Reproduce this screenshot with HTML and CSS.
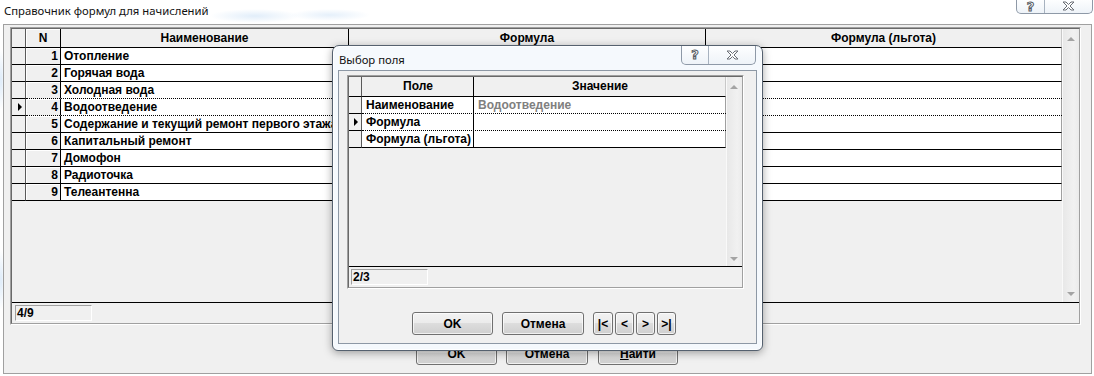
FILE: index.html
```html
<!DOCTYPE html>
<html lang="ru">
<head>
<meta charset="utf-8">
<title>Справочник формул для начислений</title>
<link rel="stylesheet" href="styles.css">
</head>
<body>
<header class="titlebar">
  <span class="title">Справочник формул для начислений</span>
  <div class="caption main-caption">
    <span class="cap-help">?</span>
    <span class="cap-close"><svg width="13" height="10" viewBox="0 0 13 10"><path d="M1 1h3l2.5 2.5L9 1h3L8 5l4 4H9L6.5 6.5 4 9H1l4-4z" fill="#fff" stroke="#6a6f76" stroke-width="1"/></svg></span>
  </div>
</header>

<main class="window">
  <div class="gridframe main-frame">
    <div class="gridin">
      <div class="gridmain main-gridmain">
        <div class="table">
          <div class="row head">
            <div class="cell ind"></div>
            <div class="cell n">N</div>
            <div class="cell name">Наименование</div>
            <div class="cell formula">Формула</div>
            <div class="cell lgota">Формула (льгота)</div>
          </div>
          <div class="row"><div class="cell ind"></div><div class="cell n">1</div><div class="cell name">Отопление</div><div class="cell formula"></div><div class="cell lgota"></div></div>
          <div class="row"><div class="cell ind"></div><div class="cell n">2</div><div class="cell name">Горячая вода</div><div class="cell formula"></div><div class="cell lgota"></div></div>
          <div class="row before-current"><div class="cell ind"></div><div class="cell n">3</div><div class="cell name">Холодная вода</div><div class="cell formula"></div><div class="cell lgota"></div></div>
          <div class="row current"><div class="cell ind"><span class="arrow"></span></div><div class="cell n">4</div><div class="cell name">Водоотведение</div><div class="cell formula"></div><div class="cell lgota"></div></div>
          <div class="row"><div class="cell ind"></div><div class="cell n">5</div><div class="cell name">Содержание и текущий ремонт первого этажа</div><div class="cell formula"></div><div class="cell lgota"></div></div>
          <div class="row"><div class="cell ind"></div><div class="cell n">6</div><div class="cell name">Капитальный ремонт</div><div class="cell formula"></div><div class="cell lgota"></div></div>
          <div class="row"><div class="cell ind"></div><div class="cell n">7</div><div class="cell name">Домофон</div><div class="cell formula"></div><div class="cell lgota"></div></div>
          <div class="row"><div class="cell ind"></div><div class="cell n">8</div><div class="cell name">Радиоточка</div><div class="cell formula"></div><div class="cell lgota"></div></div>
          <div class="row"><div class="cell ind"></div><div class="cell n">9</div><div class="cell name">Телеантенна</div><div class="cell formula"></div><div class="cell lgota"></div></div>
        </div>
        <div class="vscroll"><span class="sarrow up"></span><span class="sarrow down"></span></div>
      </div>
      <div class="status"><span class="counter">4/9</span></div>
    </div>
  </div>
  <div class="buttons main-buttons">
    <button class="btn b-ok">OK</button>
    <button class="btn b-cancel">Отмена</button>
    <button class="btn b-find"><u>Н</u>айти</button>
  </div>
</main>

<section class="dialog">
  <div class="dlg-titlebar">
    <span class="dlg-title">Выбор поля</span>
    <div class="caption dlg-caption">
      <span class="cap-help">?</span>
      <span class="cap-close"><svg width="13" height="10" viewBox="0 0 13 10"><path d="M1 1h3l2.5 2.5L9 1h3L8 5l4 4H9L6.5 6.5 4 9H1l4-4z" fill="#fff" stroke="#6a6f76" stroke-width="1"/></svg></span>
    </div>
  </div>
  <div class="client">
    <div class="gridframe dlg-frame">
      <div class="gridin">
        <div class="gridmain dlg-gridmain">
          <div class="table">
            <div class="row head">
              <div class="cell ind"></div>
              <div class="cell field">Поле</div>
              <div class="cell value">Значение</div>
            </div>
            <div class="row before-current"><div class="cell ind"></div><div class="cell field">Наименование</div><div class="cell value muted">Водоотведение</div></div>
            <div class="row current"><div class="cell ind"><span class="arrow"></span></div><div class="cell field">Формула</div><div class="cell value"></div></div>
            <div class="row"><div class="cell ind"></div><div class="cell field">Формула (льгота)</div><div class="cell value"></div></div>
          </div>
          <div class="vscroll"><span class="sarrow up"></span><span class="sarrow down"></span></div>
        </div>
        <div class="status"><span class="counter">2/3</span></div>
      </div>
    </div>
    <div class="buttons dlg-buttons">
      <button class="btn d-ok">OK</button>
      <button class="btn d-cancel">Отмена</button>
      <button class="btn nav nav-first">|&lt;</button>
      <button class="btn nav">&lt;</button>
      <button class="btn nav">&gt;</button>
      <button class="btn nav">&gt;|</button>
    </div>
  </div>
</section>
</body>
</html>
```

FILE: styles.css
```css
* { box-sizing: border-box; }
html, body { margin: 0; padding: 0; }
body {
  width: 1094px;
  height: 376px;
  overflow: hidden;
  position: relative;
  color: #000;
  font-family: "Liberation Sans", Arial, sans-serif;
  font-size: 12px;
  font-weight: bold;
  background:
    radial-gradient(ellipse 45px 7px at 255px 16px, rgba(170, 205, 240, 0.35), transparent),
    radial-gradient(ellipse 40px 6px at 330px 15px, rgba(170, 205, 240, 0.3), transparent),
    radial-gradient(ellipse 4px 30px at 1px 80px, rgba(170, 205, 240, 0.4), transparent),
    radial-gradient(ellipse 4px 30px at 1px 280px, rgba(170, 205, 240, 0.4), transparent),
    #fff;
}

/* ---------- title bar ---------- */
.titlebar {
  height: 24px;
  display: flex;
  justify-content: space-between;
  align-items: flex-start;
}
.title {
  font-family: "Noto Sans", "Open Sans", sans-serif;
  font-weight: normal;
  font-size: 11.3px;
  line-height: 16px;
  padding: 3px 0 0 4px;
  color: #111;
}
.caption {
  display: flex;
  height: 15px;
  border: 1px solid #8e99a7;
  border-top: none;
  border-radius: 0 0 5px 5px;
  background: linear-gradient(#fdfeff, #eef3f8);
  overflow: hidden;
}
.main-caption { width: 77px; margin-right: 1px; height: 14px; }
.cap-help {
  width: 28px;
  border-right: 1px solid #a7b2bf;
  text-align: center;
  font-family: "DejaVu Sans", sans-serif;
  font-size: 13px;
  line-height: 13px;
  color: #fff;
  -webkit-text-stroke: 1px #555a61;
}
.cap-close {
  flex: 1;
  display: flex;
  justify-content: center;
  align-items: center;
  padding-bottom: 1px;
}

/* ---------- main window ---------- */
.window {
  margin-left: 3px;
  width: 1089px;
  height: 350px;
  border: 1px solid #a0a0a0;
  background: #f0f0f0;
}

.gridframe {
  border: 1px solid;
  border-color: #a0a0a0 #fff #fff #a0a0a0;
}
.gridin {
  height: 100%;
  border: 1px solid;
  border-color: #696969 #a0a0a0 #a0a0a0 #696969;
  display: flex;
  flex-direction: column;
}
.main-frame {
  margin: 2px 0 0 6px;
  width: 1071px;
  height: 298px;
}
.gridmain {
  display: flex;
  background: #f0f0f0;
}
.main-gridmain { height: 273px; }
.table { flex: 1; min-width: 0; }
.row { display: flex; height: 17px; position: relative; }
.row.head { height: 19px; }
.cell {
  height: 100%;
  border-right: 1px solid #000;
  border-bottom: 1px solid #000;
  background: #fff;
  line-height: 16px;
  padding: 0 3px;
  white-space: nowrap;
  overflow: hidden;
  flex: none;
}
.row.head .cell {
  background: #f0f0f0;
  text-align: center;
  line-height: 18px;
}
.cell.ind {
  width: 14px;
  padding: 0;
  background: #f0f0f0;
  border-right-color: #5a5a5a;
  display: flex;
  align-items: center;
  justify-content: center;
}
.cell.n {
  width: 35px;
  background: #f0f0f0;
  text-align: right;
  padding: 0 2px 0 0;
  box-shadow: inset 1px 1px 0 #fff;
}
.row.head .cell.n { text-align: center; padding: 0; }
.cell.name { width: 288px; padding-left: 3px; }
.cell.formula { width: 357px; }
.cell.lgota { width: 356px; border-right-color: #a0a0a0; }
.row.head .cell.lgota { border-right-color: #c8c8c8; }

.arrow {
  width: 0;
  height: 0;
  border-left: 4px solid #000;
  border-top: 4px solid transparent;
  border-bottom: 4px solid transparent;
  margin-left: 2px;
}
.row.before-current .cell:not(.ind),
.row.current .cell:not(.ind) { border-bottom-color: transparent; }
.row.current::after {
  content: "";
  position: absolute;
  left: 14px;
  right: 0;
  top: -1px;
  bottom: 0;
  border-top: 1px dotted #000;
  border-bottom: 1px dotted #000;
  pointer-events: none;
}

.vscroll {
  width: 17px;
  flex: none;
  display: flex;
  flex-direction: column;
  justify-content: space-between;
  align-items: center;
  padding: 8px 0 6px 0;
  background: linear-gradient(90deg, #f9f9f9 0, #f9f9f9 1px, #e8e8e8 1px, #f1f1f1 70%, #ebebeb 100%);
}
.sarrow {
  width: 0;
  height: 0;
  border-left: 4px solid transparent;
  border-right: 4px solid transparent;
}
.sarrow.up { border-bottom: 4px solid #a4a4a4; }
.sarrow.down { border-top: 4px solid #a4a4a4; }

.status {
  flex: 1;
  border-top: 1px solid #000;
  padding: 2px 0 0 3px;
  background: #f0f0f0;
}
.counter {
  display: block;
  width: 77px;
  height: 16px;
  border: 1px solid;
  border-color: #a0a0a0 #fff #fff #a0a0a0;
  line-height: 14px;
  padding-left: 1px;
}

/* ---------- buttons ---------- */
.buttons { display: flex; }
.btn {
  height: 23px;
  padding: 0;
  border: 1px solid #707070;
  border-radius: 3px;
  background: linear-gradient(#f2f2f2 0%, #ebebeb 50%, #dddddd 50%, #cfcfcf 100%);
  box-shadow: inset 0 0 0 1px rgba(255, 255, 255, 0.7);
  font-family: "Liberation Sans", Arial, sans-serif;
  font-size: 12px;
  font-weight: bold;
  color: #000;
  line-height: 20px;
}
.btn u { text-decoration: underline; }
.main-buttons {
  margin: 17px 0 0 412px;
  gap: 9px;
}
.b-ok { width: 81px; }
.b-cancel { width: 82px; }
.b-find { width: 80px; margin-left: 1px; }

/* ---------- dialog ---------- */
.dialog {
  position: absolute;
  left: 332px;
  top: 45px;
  width: 431px;
  height: 306px;
  border: 1px solid #55616f;
  border-radius: 7px 7px 6px 6px;
  background: #f5f9fd;
  box-shadow: 0 2px 9px rgba(0, 0, 0, 0.35), inset 0 0 0 1px rgba(255, 255, 255, 0.8);
}
.dlg-titlebar {
  height: 24px;
  display: flex;
  justify-content: space-between;
  align-items: flex-start;
}
.dlg-title {
  font-family: "Noto Sans", "Open Sans", sans-serif;
  font-weight: normal;
  font-size: 11.3px;
  line-height: 16px;
  padding: 6px 0 0 6px;
  color: #111;
}
.dlg-caption { width: 75px; height: 19px; margin-right: 6px; }
.dlg-caption .cap-help { width: 27px; line-height: 17px; }
.client {
  margin: 0 5px;
  height: 274px;
  border: 1px solid #8d98a5;
  background: #f0f0f0;
}
.dlg-frame {
  margin: 4px 0 0 8px;
  width: 397px;
  height: 214px;
}
.dlg-gridmain { height: 189px; }
.row.head .cell.field,
.row.head .cell.value { line-height: 19px; }
.dlg-gridmain .row.head { height: 20px; }
.dlg-gridmain .cell.ind { width: 13px; }
.dlg-gridmain .row.current::after { left: 13px; }
.cell.field { width: 112px; padding-left: 4px; }
.cell.value { width: 252px; padding-left: 4px; border-right-color: #a0a0a0; }
.row.head .cell.value { border-right-color: #c8c8c8; }
.cell.muted { color: #808080; }
.dlg-gridmain .vscroll { width: 16px; padding: 8px 0 5px 0; }
.dlg-frame .status { padding: 2px 0 0 2px; }

.dlg-buttons {
  margin: 23px 0 0 73px;
  align-items: flex-start;
}
.d-ok { width: 81px; }
.d-cancel { width: 82px; margin-left: 9px; }
.nav { width: 19px; margin-left: 2px; }
.nav-first { width: 20px; margin-left: 9px; }
```
